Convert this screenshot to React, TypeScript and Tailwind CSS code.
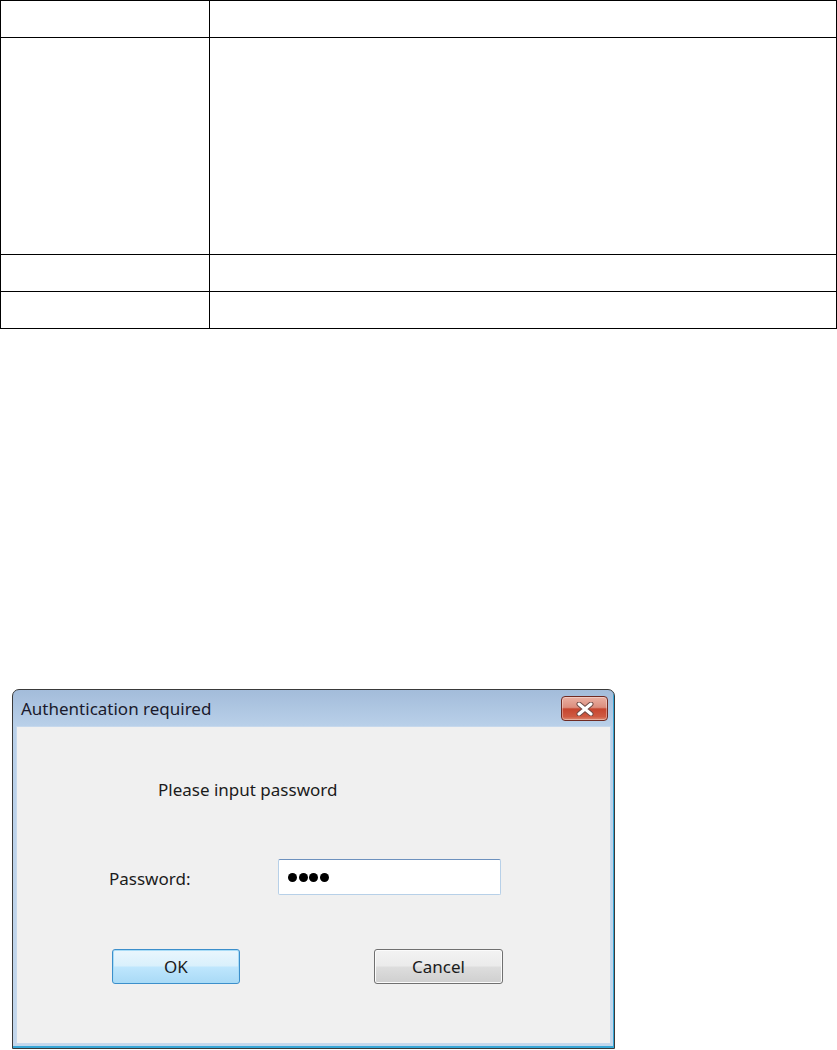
const ui = { fontFamily: '"Noto Sans", "Open Sans", sans-serif' };

const CloseButton = () => (
  <div className="w-[47px] h-[25px] rounded-[4px] border border-[#6f2a22] bg-[linear-gradient(to_bottom,#eab0a3_0%,#dc8e7e_45%,#c6452f_52%,#cf5a42_85%,#dc8a72_100%)] shadow-[inset_0_0_0_1px_rgba(255,255,255,0.35)] flex items-center justify-center">
    <svg width="18" height="14" viewBox="0 0 18 14">
      <path d="M3 2 L15 12 M15 2 L3 12" stroke="#6e4a46" strokeWidth="5" strokeLinecap="round" />
      <path d="M3 2 L15 12 M15 2 L3 12" stroke="#ffffff" strokeWidth="3" strokeLinecap="round" />
    </svg>
  </div>
);

const Dialog = () => (
  <div
    className="w-[603px] h-[360px] flex flex-col rounded-t-[7px] border border-[#3a3a3a] bg-[linear-gradient(to_bottom,#a3bcda_0px,#b9d0e9_36px,#c3d7ec_100%)] px-[3px] pb-[4px] shadow-[inset_-1px_-2px_0_#36a6d6]"
    style={ui}
  >
    {/* title bar */}
    <div className="h-[36px] shrink-0 flex items-center justify-between pl-[5px] pr-[3px]">
      <span className="text-[17px] text-[#1a1a2c] leading-none pt-[1px]">Authentication required</span>
      <div className="self-start mt-[6px]">
        <CloseButton />
      </div>
    </div>

    {/* client area */}
    <div className="flex-1 bg-[#f0f0f0] border border-[#c6d8ec] text-[#1b1b1b]">
      <div className="pt-[51px] pl-[141px] h-[75px] text-[17px] leading-6">Please input password</div>

      <div className="mt-[57px] flex items-center">
        <span className="ml-[92px] w-[169px] text-[17px] leading-6 pt-[4px]">Password:</span>
        <div className="w-[223px] h-[36px] bg-white rounded-[2px] border border-[#b7d0e8] border-t-[#6d91be] flex items-center pl-[9px] gap-[1.5px]">
          <span className="w-[9px] h-[9px] rounded-full bg-black" />
          <span className="w-[9px] h-[9px] rounded-full bg-black" />
          <span className="w-[9px] h-[9px] rounded-full bg-black" />
          <span className="w-[9px] h-[9px] rounded-full bg-black" />
        </div>
      </div>

      <div className="mt-[54px] flex">
        <button className="ml-[95px] w-[128px] h-[35px] rounded-[3px] border border-[#3c8fcb] bg-[linear-gradient(to_bottom,#eaf6fd_0%,#d9f0fc_48%,#bee6fd_52%,#a9daf6_100%)] shadow-[inset_0_0_0_1px_#a8dcf7] text-[17px] text-[#1b1b1b]">
          OK
        </button>
        <button className="ml-[134px] w-[129px] h-[35px] rounded-[3px] border border-[#707070] bg-[linear-gradient(to_bottom,#f3f3f3_0%,#ebebeb_48%,#dddddd_52%,#cfcfcf_100%)] shadow-[inset_0_0_0_1px_#fbfbfb] text-[17px] text-[#1b1b1b]">
          Cancel
        </button>
      </div>
    </div>
  </div>
);

export default function App() {
  return (
    <div className="w-[837px] min-h-[1050px] bg-white">
      <div className="w-[837px] grid grid-cols-[209px_1fr] border-l border-t border-black">
        <div className="h-[37px] border-r border-b border-black" />
        <div className="h-[37px] border-r border-b border-black" />
        <div className="h-[217px] border-r border-b border-black" />
        <div className="h-[217px] border-r border-b border-black" />
        <div className="h-[37px] border-r border-b border-black" />
        <div className="h-[37px] border-r border-b border-black" />
        <div className="h-[37px] border-r border-b border-black" />
        <div className="h-[37px] border-r border-b border-black" />
      </div>

      <div className="mt-[360px] ml-[12px]">
        <Dialog />
      </div>
    </div>
  );
}
